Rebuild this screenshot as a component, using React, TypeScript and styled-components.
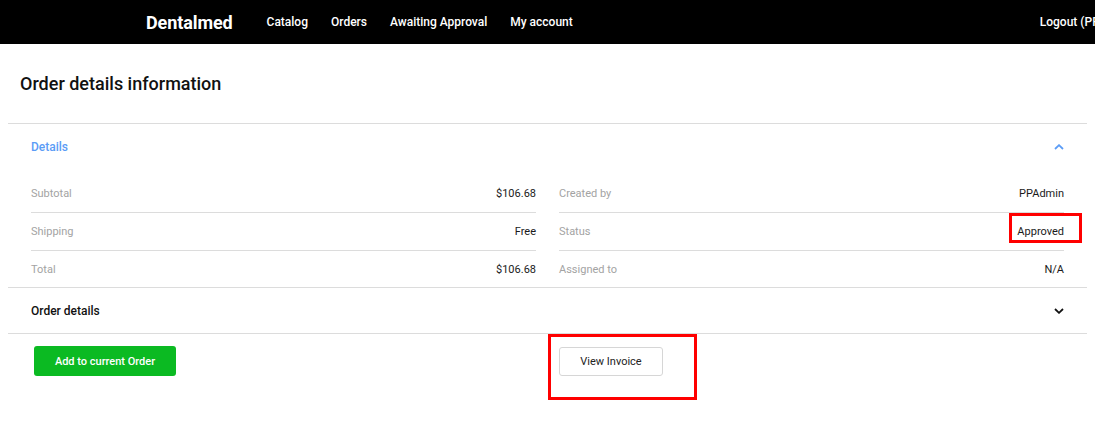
import React from "react";
import styled, { createGlobalStyle } from "styled-components";

const GlobalStyle = createGlobalStyle`
  html, body {
    margin: 0;
    padding: 0;
    background: #fff;
    font-family: Roboto, "Liberation Sans", Arial, sans-serif;
  }
  * {
    box-sizing: border-box;
  }
`;

const Page = styled.div`
  min-height: 434px;
`;

const TopBar = styled.header`
  background-color: #000;
  height: 44px;
  overflow: hidden;
`;

const TopBarInner = styled.div`
  width: 1160px;
  height: 100%;
  display: flex;
  align-items: center;
  padding: 0 22px 0 146px;
`;

const Logo = styled.a`
  color: #fff;
  font-size: 18px;
  font-weight: 700;
  text-decoration: none;
  letter-spacing: -0.1px;
`;

const NavList = styled.nav`
  display: flex;
  align-items: center;
  gap: 23px;
  margin-left: 34px;
`;

const NavLink = styled.a<{ $push?: boolean }>`
  color: #fff;
  font-size: 12px;
  font-weight: 500;
  text-decoration: none;
  white-space: nowrap;
  margin-left: ${(p) => (p.$push ? "auto" : "0")};
`;

const Main = styled.main`
  padding: 0 8px;
`;

const PageTitle = styled.h1`
  height: 79px;
  margin: 0;
  padding: 0 12px;
  display: flex;
  align-items: center;
  font-size: 18px;
  font-weight: 500;
  color: #111;
`;

const Panel = styled.section<{ $first?: boolean }>`
  border-top: ${(p) => (p.$first ? "1px solid #dcdcdc" : "none")};
  border-bottom: 1px solid #dcdcdc;
`;

const PanelHead = styled.div<{ $tall?: boolean }>`
  height: ${(p) => (p.$tall ? "46px" : "45px")};
  padding: 0 23px;
  display: flex;
  align-items: center;
  justify-content: space-between;
`;

const PanelTitle = styled.span<{ $active?: boolean }>`
  font-size: 12px;
  font-weight: 500;
  color: ${(p) => (p.$active ? "#5b9cf6" : "#111")};
`;

const Chevron = styled.svg`
  width: 10px;
  height: 6px;
  display: block;
`;

const DetailsGrid = styled.div`
  display: grid;
  grid-template-columns: 1fr 1fr;
  column-gap: 23px;
  padding: 5px 23px 0;
`;

const Column = styled.div`
  display: flex;
  flex-direction: column;
`;

const InfoRow = styled.div`
  position: relative;
  height: 38px;
  display: flex;
  align-items: center;
  justify-content: space-between;
  font-size: 11px;
  border-bottom: 1px solid #dcdcdc;

  &:last-child {
    height: 36px;
    border-bottom: none;
  }
`;

const InfoLabel = styled.span`
  color: #a3a3a3;
`;

const InfoValue = styled.span`
  color: #1a1a1a;
`;

const Highlight = styled.span<{ $top: number; $right?: number; $left?: number; $w: number; $h: number }>`
  position: absolute;
  top: ${(p) => p.$top}px;
  ${(p) => (p.$right !== undefined ? `right: ${p.$right}px;` : "")}
  ${(p) => (p.$left !== undefined ? `left: ${p.$left}px;` : "")}
  width: ${(p) => p.$w}px;
  height: ${(p) => p.$h}px;
  border: 3px solid #ff0000;
  pointer-events: none;
`;

const Actions = styled.div`
  display: grid;
  grid-template-columns: 1fr 1fr;
  column-gap: 23px;
  padding: 12px 23px 40px;
`;

const ActionCell = styled.div`
  position: relative;
  display: flex;
  align-items: flex-start;
`;

const GreenButton = styled.button`
  margin-left: 3px;
  width: 142px;
  height: 30px;
  border: none;
  border-radius: 3px;
  background-color: #0bba22;
  color: #fff;
  font-family: inherit;
  font-size: 11px;
  font-weight: 500;
  cursor: pointer;
`;

const OutlineButton = styled.button`
  margin-top: 1px;
  width: 104px;
  height: 29px;
  border: 1px solid #d6d6d6;
  border-radius: 3px;
  background-color: #fff;
  color: #222;
  font-family: inherit;
  font-size: 11px;
  cursor: pointer;
`;

const leftRows = [
  { label: "Subtotal", value: "$106.68" },
  { label: "Shipping", value: "Free" },
  { label: "Total", value: "$106.68" },
];

const rightRows = [
  { label: "Created by", value: "PPAdmin" },
  { label: "Status", value: "Approved" },
  { label: "Assigned to", value: "N/A" },
];

export default function App() {
  return (
    <Page>
      <GlobalStyle />
      <TopBar>
        <TopBarInner>
          <Logo href="#">Dentalmed</Logo>
          <NavList>
            <NavLink href="#">Catalog</NavLink>
            <NavLink href="#">Orders</NavLink>
            <NavLink href="#">Awaiting Approval</NavLink>
            <NavLink href="#">My account</NavLink>
          </NavList>
          <NavLink href="#" $push>
            Logout (PPAdmin)
          </NavLink>
        </TopBarInner>
      </TopBar>
      <Main>
        <PageTitle>Order details information</PageTitle>
        <Panel $first>
          <PanelHead $tall>
            <PanelTitle $active>Details</PanelTitle>
            <Chevron viewBox="0 0 10 6">
              <polyline points="1,5 5,1.2 9,5" fill="none" stroke="#5b9cf6" strokeWidth="1.8" />
            </Chevron>
          </PanelHead>
          <DetailsGrid>
            <Column>
              {leftRows.map((r) => (
                <InfoRow key={r.label}>
                  <InfoLabel>{r.label}</InfoLabel>
                  <InfoValue>{r.value}</InfoValue>
                </InfoRow>
              ))}
            </Column>
            <Column>
              {rightRows.map((r) => (
                <InfoRow key={r.label}>
                  <InfoLabel>{r.label}</InfoLabel>
                  <InfoValue>{r.value}</InfoValue>
                  {r.label === "Status" && <Highlight $top={0} $right={-18} $w={73} $h={30} />}
                </InfoRow>
              ))}
            </Column>
          </DetailsGrid>
        </Panel>
        <Panel>
          <PanelHead>
            <PanelTitle>Order details</PanelTitle>
            <Chevron viewBox="0 0 10 6">
              <polyline points="1,1 5,4.8 9,1" fill="none" stroke="#111" strokeWidth="1.8" />
            </Chevron>
          </PanelHead>
        </Panel>
        <Actions>
          <ActionCell>
            <GreenButton type="button">Add to current Order</GreenButton>
          </ActionCell>
          <ActionCell>
            <OutlineButton type="button">View Invoice</OutlineButton>
            <Highlight $top={-12} $left={-11} $w={149} $h={66} />
          </ActionCell>
        </Actions>
      </Main>
    </Page>
  );
}
